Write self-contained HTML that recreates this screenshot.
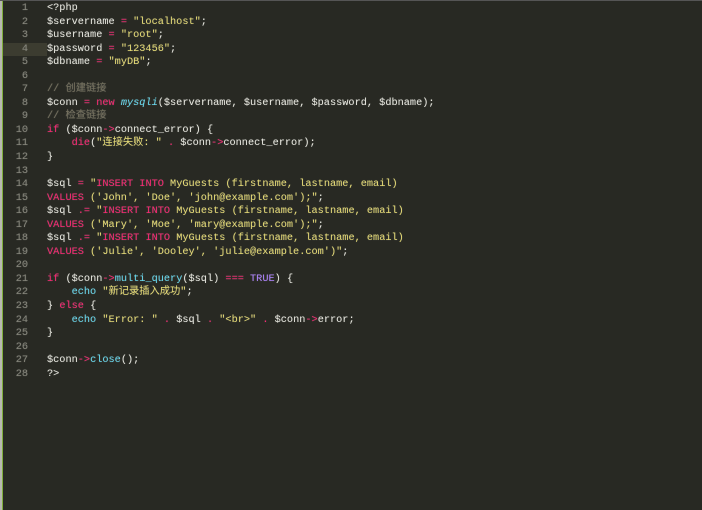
<!DOCTYPE html>
<html><head><meta charset="utf-8"><style>
html,body{margin:0;padding:0;width:702px;height:509px;overflow:hidden;background:#282923;}
.wrap{position:absolute;left:0;top:0;width:702px;height:509px;background:#282923;border-top:1px solid #555;box-sizing:border-box;}
.lb{position:absolute;left:0;top:0;width:2px;height:509px;background:#b8b8b0;}
.lg{position:absolute;left:2px;top:0;width:1px;height:509px;background:#7fae3a;}
.hl{position:absolute;left:3px;top:42px;width:44px;height:13px;background:#3c3c30;}
.code{position:absolute;left:0;top:1px;font-family:"Liberation Mono","Noto Sans CJK SC",monospace;font-size:10.25px;line-height:13.54px;color:#e8e8e0;white-space:pre;text-shadow:0 0 1px rgba(255,255,255,0.25);}
.n{display:inline-block;width:28px;text-align:right;color:#85857a;margin-right:19px;}
.s{color:#e6db74}.k{color:#f92672}.c{color:#66d9ef}.m{color:#75715e}.p{color:#ae81ff}.o{color:#f92672}
</style></head><body><div class="wrap">
<div class="lb"></div><div class="lg"></div><div class="hl"></div>
<div class="code"><span class="n">1</span>&lt;?php
<span class="n">2</span>$servername <span class="o">=</span> <span class="s">"localhost"</span>;
<span class="n">3</span>$username <span class="o">=</span> <span class="s">"root"</span>;
<span class="n">4</span>$password <span class="o">=</span> <span class="s">"123456"</span>;
<span class="n">5</span>$dbname <span class="o">=</span> <span class="s">"myDB"</span>;
<span class="n">6</span>
<span class="n">7</span><span class="m">// 创建链接</span>
<span class="n">8</span>$conn <span class="o">=</span> <span class="k">new</span> <span class="c"><i>mysqli</i></span>($servername, $username, $password, $dbname);
<span class="n">9</span><span class="m">// 检查链接</span>
<span class="n">10</span><span class="k">if</span> ($conn<span class="o">-&gt;</span>connect_error) {
<span class="n">11</span>    <span class="k">die</span>(<span class="s">"连接失败: "</span> <span class="o">.</span> $conn<span class="o">-&gt;</span>connect_error);
<span class="n">12</span>}
<span class="n">13</span>
<span class="n">14</span>$sql <span class="o">=</span> <span class="s">"<span class="k">INSERT INTO</span> MyGuests (firstname, lastname, email)</span>
<span class="n">15</span><span class="s"><span class="k">VALUES</span> ('John', 'Doe', 'john@example.com');"</span>;
<span class="n">16</span>$sql <span class="o">.=</span> <span class="s">"<span class="k">INSERT INTO</span> MyGuests (firstname, lastname, email)</span>
<span class="n">17</span><span class="s"><span class="k">VALUES</span> ('Mary', 'Moe', 'mary@example.com');"</span>;
<span class="n">18</span>$sql <span class="o">.=</span> <span class="s">"<span class="k">INSERT INTO</span> MyGuests (firstname, lastname, email)</span>
<span class="n">19</span><span class="s"><span class="k">VALUES</span> ('Julie', 'Dooley', 'julie@example.com')"</span>;
<span class="n">20</span>
<span class="n">21</span><span class="k">if</span> ($conn<span class="o">-&gt;</span><span class="c">multi_query</span>($sql) <span class="o">===</span> <span class="p">TRUE</span>) {
<span class="n">22</span>    <span class="c">echo</span> <span class="s">"新记录插入成功"</span>;
<span class="n">23</span>} <span class="k">else</span> {
<span class="n">24</span>    <span class="c">echo</span> <span class="s">"Error: "</span> <span class="o">.</span> $sql <span class="o">.</span> <span class="s">"&lt;br&gt;"</span> <span class="o">.</span> $conn<span class="o">-&gt;</span>error;
<span class="n">25</span>}
<span class="n">26</span>
<span class="n">27</span>$conn<span class="o">-&gt;</span><span class="c">close</span>();
<span class="n">28</span>?&gt;</div>
</div></body></html>
